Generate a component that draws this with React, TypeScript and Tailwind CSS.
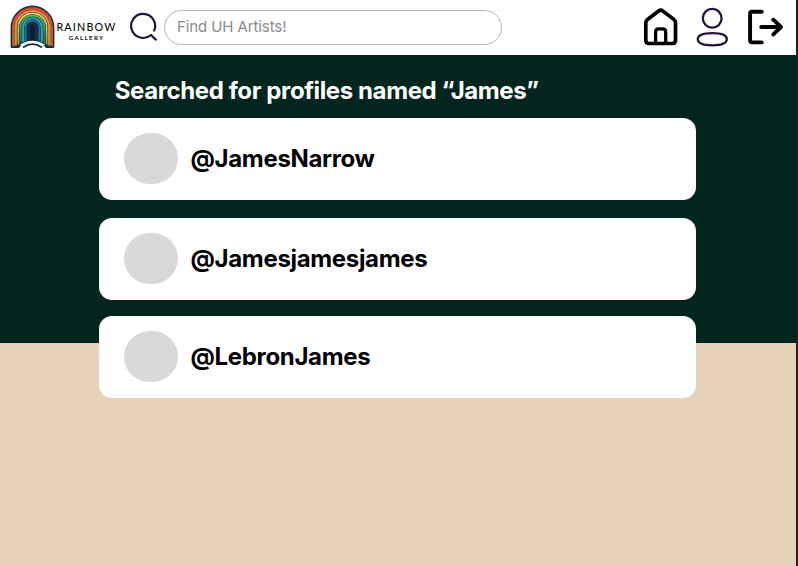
const profiles = ["@JamesNarrow", "@Jamesjamesjames", "@LebronJames"];

function arch(r: number, bottom: number) {
  return `M${22.5 - r} ${bottom}V${22.5}A${r} ${r} 0 0 1 ${22.5 + r} ${22.5}V${bottom}`;
}

const bands = [
  { r: 19, bottom: 41, color: "url(#band-red)", width: 2.7 },
  { r: 16.6, bottom: 40.5, color: "url(#band-orange)", width: 2 },
  { r: 14.2, bottom: 39.5, color: "url(#band-yellow)", width: 1.7 },
  { r: 11.9, bottom: 38, color: "url(#band-green)", width: 2.3 },
  { r: 9.3, bottom: 37, color: "#2f9fc0", width: 2 },
  { r: 6.9, bottom: 36, color: "#1f6fb0", width: 1.8 },
];

const gradients = [
  { id: "band-red", from: "#e2452b", to: "#b56a2a" },
  { id: "band-orange", from: "#f39036", to: "#d98a34" },
  { id: "band-yellow", from: "#dfd58a", to: "#8f9a3e" },
  { id: "band-green", from: "#52b04e", to: "#1f5f3c" },
];

function RainbowMark() {
  return (
    <svg className="h-[45px] w-[45px] shrink-0" viewBox="0 0 45 45" fill="none">
      <defs>
        {gradients.map((g) => (
          <linearGradient key={g.id} id={g.id} gradientUnits="userSpaceOnUse" x1="0" y1="4" x2="0" y2="40">
            <stop offset="0.2" stopColor={g.from} />
            <stop offset="1" stopColor={g.to} />
          </linearGradient>
        ))}
      </defs>
      <path
        d="M0.6 41.5V22.5A21.9 21.9 0 0 1 44.4 22.5V41.5Q44.4 43 43 43H2Q0.6 43 0.6 41.5Z"
        fill="#15303a"
      />
      {bands.map((b) => (
        <path key={b.r} d={arch(b.r, b.bottom)} stroke={b.color} strokeWidth={b.width} />
      ))}
      <path d={arch(2.8, 36)} fill="#08202b" stroke="#123a56" />
      <path d="M8.5 43.5Q14 36.8 22.5 36.8T36.5 43.5V45H8.5Z" fill="#fff" />
      <path d="M10.5 40.2Q22.5 32.6 34.5 40.2" stroke="#fff" strokeWidth="1.4" />
      <path d="M13 42.4Q22.5 36 32 42.4" stroke="#15303a" strokeWidth="1.8" />
    </svg>
  );
}

function Logo() {
  return (
    <div className="flex w-[120px] shrink-0 items-center pl-[10px]">
      <RainbowMark />
      <div className="flex w-[62px] shrink-0 flex-col items-center pt-[9px] font-['Lato',sans-serif] whitespace-nowrap text-[#0a0a0a]">
        <span className="pl-[1px] text-[10.7px] leading-[11px] font-medium tracking-[1.2px]">RAINBOW</span>
        <span className="pt-px pl-[1px] text-[6.2px] leading-[9px] font-bold tracking-[1.3px]">GALLERY</span>
      </div>
    </div>
  );
}

function SearchIcon() {
  return (
    <svg className="ml-[8px] h-[30px] w-[30px] shrink-0" viewBox="128 12 30 30" fill="none" stroke="#23123a" strokeWidth="2.2" strokeLinecap="round" strokeLinejoin="round">
      <path d="M154.2 30.6A12 12 0 1 0 151 35L155.8 39.6" />
    </svg>
  );
}

function HomeIcon() {
  return (
    <svg className="h-[40px] w-[36px] shrink-0" viewBox="643 6.5 36 40" fill="none" stroke="#000" strokeWidth="3.7" strokeLinecap="round" strokeLinejoin="round">
      <path d="M645.8 22.3Q645.8 20.3 647.5 18.9L658.6 10.5Q660.7 9 662.8 10.5L673.8 18.9Q675.5 20.3 675.5 22.3V39.8Q675.5 43 672.5 43H648.8Q645.8 43 645.8 39.8Z" />
      <path d="M655.6 42.5V31.6Q655.6 28.4 658.5 28.4H662.8Q665.7 28.4 665.7 31.6V42.5" strokeWidth="3.3" />
    </svg>
  );
}

function PersonIcon() {
  return (
    <svg className="h-[40px] w-[34px] shrink-0" viewBox="695 6.5 34 40" fill="none" stroke="#23123a" strokeWidth="2.3">
      <circle cx="712.2" cy="17.8" r="9.4" />
      <path d="M712.3 32.7C721 32.7 726.8 34.6 726.8 38.6S721 44.9 712.3 44.9S697.8 42.6 697.8 38.6S703.6 32.7 712.3 32.7Z" />
    </svg>
  );
}

function SignOutIcon() {
  return (
    <svg className="h-[40px] w-[38px] shrink-0" viewBox="747 6.5 38 40" fill="none" stroke="#000" strokeWidth="3.9" strokeLinecap="round" strokeLinejoin="round">
      <path d="M761.7 11.3H752.2Q750.1 11.3 750.1 13.4V39.8Q750.1 41.9 752.2 41.9H761.7" />
      <path d="M761.2 26.5H780.5M773.3 19.2L781 26.5L773.3 33.9" />
    </svg>
  );
}

export default function App() {
  return (
    <div className="h-[566px] w-[798px] overflow-hidden border-r-2 border-[#1e1e1e] bg-[#e6d3ba] font-['Inter',sans-serif]">
      <header className="flex h-[54.5px] items-center bg-white pr-[11px]">
        <Logo />
        <SearchIcon />
        <input
          className="ml-[5.5px] h-[35px] w-[338.5px] rounded-full border border-[#b3b3b3] bg-white px-[12.5px] pb-[2px] text-[15px] tracking-[-0.1px] text-black placeholder:text-[#8a8a8a]"
          placeholder="Find UH Artists!"
        />
        <nav className="ml-auto flex shrink-0 items-center">
          <HomeIcon />
          <div className="ml-[16px] flex">
            <PersonIcon />
          </div>
          <div className="ml-[18px] flex">
            <SignOutIcon />
          </div>
        </nav>
      </header>
      <main className="h-[511.5px] bg-[linear-gradient(#02261e_288.5px,#e6d3ba_288.5px)] pt-[21px] pr-[100px] pl-[98.7px]">
        <h1 className="h-[42.5px] pl-[16px] text-[24px] leading-[30px] font-bold tracking-[-0.39px] whitespace-nowrap text-white">
          Searched for profiles named “James”
        </h1>
        <ul>
          {profiles.map((name) => (
            <li
              key={name}
              className="mb-[17.2px] flex h-[82.4px] items-center rounded-[13px] bg-white pb-[1px] pl-[25px] nth-2:mb-[15.8px]"
            >
              <div className="h-[51px] w-[54px] rounded-full bg-[#d9d9d9]" />
              <span className="ml-[12.8px] pt-px text-[24px] leading-[30px] font-bold tracking-[-0.33px] text-black">{name}</span>
            </li>
          ))}
        </ul>
      </main>
    </div>
  );
}
